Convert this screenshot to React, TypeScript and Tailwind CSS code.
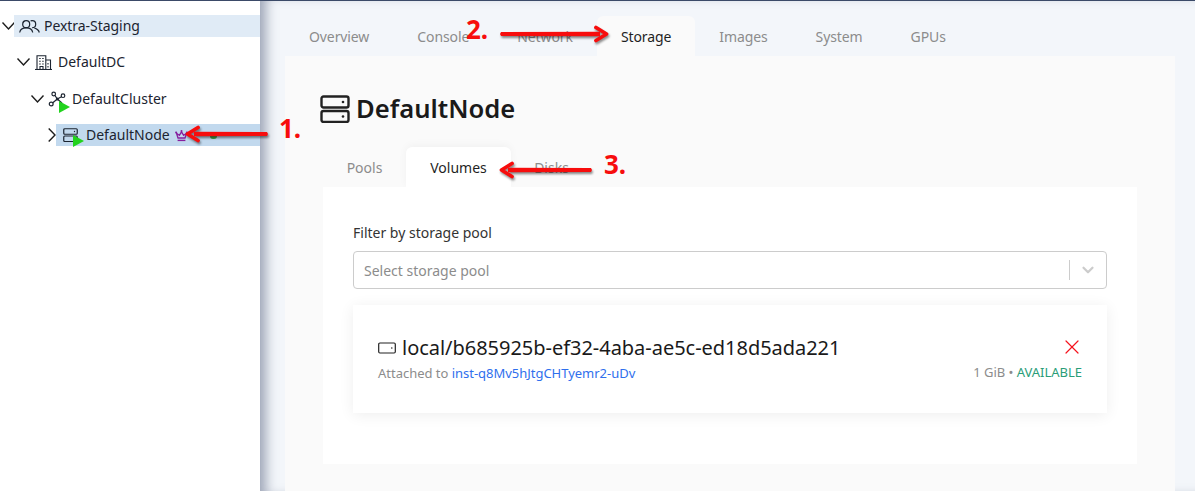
import { ChevronDown, X } from 'lucide-react';

const font = { fontFamily: '"Noto Sans", sans-serif' };

function ServerIcon({ className }: { className?: string }) {
  return (
    <svg viewBox="0 0 30 28" fill="none" stroke="currentColor" strokeWidth="2.4" className={className}>
      <rect x="1.5" y="1.5" width="27" height="11" rx="2" />
      <rect x="1.5" y="16" width="27" height="11" rx="2" />
      <circle cx="23" cy="7" r="1.3" fill="currentColor" stroke="none" />
      <circle cx="23" cy="21.5" r="1.3" fill="currentColor" stroke="none" />
    </svg>
  );
}

function PlayBadge({ className }: { className?: string }) {
  return (
    <svg viewBox="0 0 11 12" className={className}>
      <path d="M0 0 L11 6 L0 12 Z" fill="#22d31e" />
    </svg>
  );
}

function TreeChevron({ open }: { open?: boolean }) {
  if (open) {
    return (
      <svg viewBox="0 0 13 8" fill="none" stroke="#1c1c1c" strokeWidth="1.4" className="h-[8px] w-[13px] shrink-0 overflow-visible">
        <path d="M0.5 0.5 L6.5 7 L12.5 0.5" />
      </svg>
    );
  }
  return (
    <svg viewBox="0 0 8 14" fill="none" stroke="#1c1c1c" strokeWidth="1.4" className="h-[14px] w-[8px] shrink-0">
      <path d="M0.7 0.5 L7 7 L0.7 13.5" />
    </svg>
  );
}

function GroupIcon() {
  return (
    <svg viewBox="0 0 21 13" fill="none" stroke="#1c2430" strokeWidth="1.2" className="h-[13px] w-[21px] shrink-0">
      <circle cx="7.2" cy="4.2" r="3.5" />
      <path d="M0.7 12.5 C1.2 9.5 3.6 7.9 7.2 7.9 C10.8 7.9 13.2 9.5 13.7 12.5" />
      <path d="M11.6 0.9 C11.9 0.8 12.6 0.7 13.2 0.7 C15.2 0.7 16.7 2.3 16.7 4.2 C16.7 6.1 15.2 7.7 13.2 7.7" />
      <path d="M15.4 8.2 C17.8 8.8 19.7 10.2 20.3 12.5" />
    </svg>
  );
}

function BuildingIcon() {
  return (
    <svg viewBox="0 0 17 15" fill="none" stroke="#1c2430" strokeWidth="1.1" className="h-[15px] w-[17px] shrink-0">
      <path d="M0 14.5 H17" />
      <path d="M2 14.5 V0.7 H10.8 V14.5" />
      <path d="M10.8 5 H15.5 V14.5" />
      <path d="M4.2 3.5 H5.7 M7.2 3.5 H8.7 M4.2 6.3 H5.7 M7.2 6.3 H8.7 M4.2 9 H5.7 M7.2 9 H8.7" />
      <path d="M5 14.5 V11.5 H8 V14.5" />
      <path d="M13 8 V9.5 M13 11 V12.5" />
    </svg>
  );
}

function ClusterIcon() {
  return (
    <svg viewBox="0 0 16 14" fill="none" stroke="#1c2430" strokeWidth="1.2" className="h-[14px] w-[16px] overflow-visible">
      <path d="M8.3 7 L4.7 1.7 M8.3 7 L14.3 3.7 M8.3 7 L2 12.3 M8.3 7 L13 11" />
      <circle cx="4.7" cy="2" r="1.8" fill="white" />
      <circle cx="14" cy="3.7" r="1.8" fill="white" />
      <circle cx="2.2" cy="12" r="1.9" fill="white" />
      <circle cx="8.3" cy="7" r="1.5" fill="#1c2430" stroke="none" />
    </svg>
  );
}

function CrownIcon() {
  return (
    <svg viewBox="0 0 13 11" fill="none" stroke="#861f9e" strokeWidth="1.3" className="ml-[5px] h-[11px] w-[13px] shrink-0 overflow-visible">
      <path d="M1.5 3.2 L3 8 H10 L11.5 3.2 L8.6 5.4 L6.5 1.8 L4.4 5.4 Z" />
      <path d="M2.6 10.4 H10.4" strokeWidth="1.4" />
      <circle cx="1.2" cy="2.6" r="1" fill="#861f9e" stroke="none" />
      <circle cx="6.5" cy="1" r="1" fill="#861f9e" stroke="none" />
      <circle cx="11.8" cy="2.6" r="1" fill="#861f9e" stroke="none" />
    </svg>
  );
}

// hand-drawn looking red arrow from the annotation layer
function Arrow({ className, length, flip }: { className: string; length: number; flip?: boolean }) {
  const neck = length - 13;
  return (
    <svg
      viewBox={`0 0 ${length} 18`}
      className={`absolute drop-shadow-[1px_2px_1px_rgba(0,0,0,0.45)] ${className}`}
    >
      <g transform={flip ? `translate(${length} 0) scale(-1 1)` : undefined}>
        <path d={`M1 9 L2 7 L${neck + 4} 6.8 L${neck + 4} 11.2 L2 11 Z`} fill="#f70d0d" />
        <path
          d={`M${neck} 2.5 L${length - 2.5} 9 L${neck} 15.5`}
          fill="none"
          stroke="#f70d0d"
          strokeWidth="3.8"
          strokeLinecap="round"
          strokeLinejoin="round"
        />
      </g>
    </svg>
  );
}

function Sidebar() {
  return (
    <aside className="w-[260px] shrink-0 bg-white pt-[14px] text-[14px] leading-[22px] text-[#1c2430]">
      <div className="flex h-[22px] items-center pl-[2px]">
        <span className="w-[12px] shrink-0">
          <TreeChevron open />
        </span>
        <div className="flex h-[22px] flex-1 items-center bg-[#e0ebf6] pl-[5px]">
          <GroupIcon />
          <span className="ml-[4px] tracking-[-0.05px]">Pextra-Staging</span>
        </div>
      </div>

      <div className="mt-[14px] flex h-[22px] items-center pl-[17px]">
        <TreeChevron open />
        <span className="ml-[5px]">
          <BuildingIcon />
        </span>
        <span className="ml-[6px]">DefaultDC</span>
      </div>

      <div className="mt-[15px] flex h-[22px] items-center pl-[31px]">
        <TreeChevron open />
        <span className="relative ml-[5px] h-[14px] w-[16px]">
          <ClusterIcon />
          <PlayBadge className="absolute left-[10px] top-[9px] h-[12px] w-[11px]" />
        </span>
        <span className="ml-[7px]">DefaultCluster</span>
      </div>

      <div className="mt-[14px] flex h-[22px] items-center pl-[48px]">
        <TreeChevron />
        <div className="flex h-[22px] flex-1 items-center bg-[#c2d9ee] pl-[7px]">
          <span className="relative h-[14px] w-[15px]">
            <ServerIcon className="h-[14px] w-[15px] text-[#1c2430]" />
            <PlayBadge className="absolute left-[10px] top-[7px] h-[12px] w-[11px]" />
          </span>
          <span className="ml-[8px]">DefaultNode</span>
          <CrownIcon />
          <span className="ml-[22px] mt-[2px] h-[6px] w-[7px] rounded-full bg-[#43a047]" />
        </div>
      </div>
    </aside>
  );
}

function VolumeCard() {
  return (
    <div className="mt-[16px] flex h-[108px] items-center justify-between bg-white pl-[25px] pr-[25px] shadow-[0_2px_14px_rgba(0,0,0,0.07)]">
      <div className="mt-[-2px]">
        <div className="flex items-center">
          <svg viewBox="0 0 18 12" fill="none" stroke="#222" strokeWidth="1.2" className="h-[12px] w-[18px]">
            <rect x="0.7" y="1" width="16.6" height="10" rx="1.2" />
            <circle cx="13.8" cy="6" r="0.8" fill="#222" stroke="none" />
          </svg>
          <span className="ml-[6px] text-[20px] leading-[26px] tracking-[-0.03px] text-[#1a1a1a]">local/b685925b-ef32-4aba-ae5c-ed18d5ada221</span>
        </div>
        <p className="mt-[4px] text-[13px] leading-[17px] tracking-[-0.02px] text-[#8c8c8c]">
          Attached to <span className="text-[#2f6fed]">inst-q8Mv5hJtgCHTyemr2-uDv</span>
        </p>
      </div>
      <div className="mt-[-2px] flex flex-col items-end">
        <X className="mr-[-2px] h-[24px] w-[24px] text-[#f5121d]" strokeWidth={1.2} />
        <p className="mt-[5px] text-[13px] leading-[17px] tracking-[-0.02px] text-[#8c8c8c]">
          1 GiB • <span className="text-[#2a9d78]">AVAILABLE</span>
        </p>
      </div>
    </div>
  );
}

export default function App() {
  const tabs = ['Overview', 'Console', 'Network', 'Storage', 'Images', 'System', 'GPUs'];

  return (
    <div className="relative flex h-[491px] w-[1195px] overflow-hidden border-t border-[#3b4a68] bg-white" style={font}>
      <Sidebar />

      <main className="flex min-w-0 flex-1 flex-col bg-[#f3f6fa] pl-[25px] pr-[20px] pt-[15px] shadow-[inset_12px_0_12px_-6px_rgba(90,100,130,0.55)]">
        {/* main tabs */}
        <div className="flex h-[40px] shrink-0">
          {tabs.map((t) => (
            <div
              key={t}
              className={`flex items-center justify-center rounded-t-[6px] px-[24px] text-[14px] tracking-[-0.1px] ${
                t === 'Storage' ? 'bg-[#fafafa] text-[#1f1f1f]' : 'text-[#8c8c8c]'
              }`}
            >
              {t}
            </div>
          ))}
        </div>

        <section className="flex flex-1 flex-col bg-[#fafafa] pl-[38px] pr-[38px]">
          <div className="mt-[39px] flex h-[28px] items-center">
            <ServerIcon className="ml-[-3px] h-[28px] w-[30px] text-[#222]" />
            <h1 className="ml-[6px] text-[25.6px] font-semibold leading-[28px] text-[#1a1a1a]">DefaultNode</h1>
          </div>

          {/* sub tabs */}
          <div className="mt-[24px] flex h-[40px] shrink-0">
            <div className="flex w-[83px] items-center justify-center text-[14px] text-[#8c8c8c]">Pools</div>
            <div className="flex w-[105px] items-center justify-center rounded-t-[6px] bg-white text-[14px] text-[#1f1f1f] shadow-[0_-2px_8px_rgba(0,0,0,0.04)]">Volumes</div>
            <div className="flex w-[81px] items-center justify-center text-[14px] text-[#8c8c8c]">Disks</div>
          </div>

          <div className="h-[277px] bg-white px-[30px] pt-[36px]">
            <label className="block text-[14px] leading-[20px] text-[#333]">Filter by storage pool</label>
            <div className="mt-[8px] flex h-[38px] items-center justify-between rounded-[4px] border border-[#cccccc] bg-white pl-[10px] text-[14px] text-[#8c8c8c]">
              <span>Select storage pool</span>
              <div className="flex items-center">
                <span className="h-[20px] w-px bg-[#cccccc]" />
                <ChevronDown className="mx-[9px] h-[18px] w-[18px] text-[#cccccc]" strokeWidth={3} />
              </div>
            </div>
            <VolumeCard />
          </div>
        </section>
      </main>

      {/* annotations drawn over the screenshot */}
      <Arrow flip length={84} className="left-[185px] top-[124px] h-[18px] w-[84px]" />
      <span className="absolute left-[279px] top-[109px] text-[26px] font-bold leading-[36px] text-[#f70d0d]">1.</span>
      <span className="absolute left-[466px] top-[10px] text-[26px] font-bold leading-[36px] text-[#f70d0d]">2.</span>
      <Arrow length={110} className="left-[499px] top-[24px] h-[18px] w-[110px]" />
      <Arrow flip length={94} className="left-[499px] top-[160px] h-[18px] w-[94px]" />
      <span className="absolute left-[604px] top-[145px] text-[26px] font-bold leading-[36px] text-[#f70d0d]">3.</span>
    </div>
  );
}
